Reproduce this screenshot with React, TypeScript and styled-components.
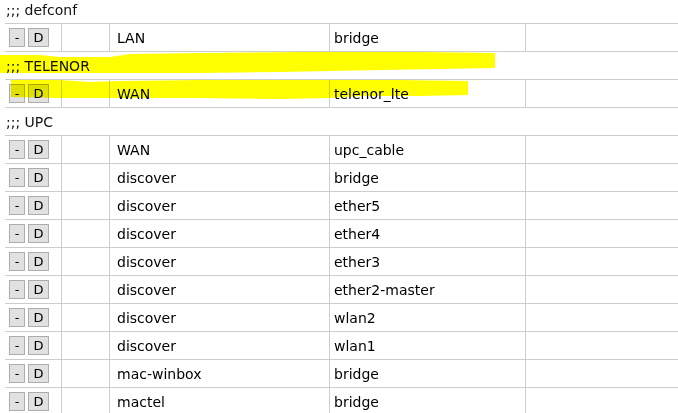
import React from "react";
import styled, { createGlobalStyle } from "styled-components";

const Global = createGlobalStyle`
  html, body { margin: 0; padding: 0; background: #fff; }
  body { overflow: hidden; width: 678px; height: 413px; }
  #root { position: relative; }
`;

const Page = styled.div`
  position: relative;
  width: 678px;
  height: 413px;
  overflow: hidden;
  font-family: "DejaVu Sans", Verdana, sans-serif;
  font-size: 14px;
  color: #000;
`;

const Table = styled.div`
  margin-top: -4px;
  margin-left: 5px;
  width: 720px;
  display: flex;
  flex-direction: column;
`;

const CommentRow = styled.div`
  box-sizing: border-box;
  height: 28px;
  border-bottom: 1px solid #cdcdcd;
  display: flex;
  align-items: center;
  padding-left: 1px;
  color: #111;
`;

const Row = styled.div`
  box-sizing: border-box;
  height: 28px;
  display: grid;
  grid-template-columns: 56px 48px 220px 196px 1fr;
`;

const Cell = styled.div<{ $pad?: number; $first?: boolean }>`
  box-sizing: border-box;
  border-bottom: 1px solid #cdcdcd;
  border-left: ${(p) => (p.$first ? "none" : "1px solid #cdcdcd")};
  padding-left: ${(p) => p.$pad ?? 0}px;
  display: flex;
  align-items: center;
  gap: 3px;
  white-space: nowrap;
`;

const Btn = styled.button<{ $w: number }>`
  box-sizing: border-box;
  width: ${(p) => p.$w}px;
  height: 19px;
  padding: 0;
  margin: 0;
  background: #e1e1e1;
  border: 1px solid #adadad;
  font-family: "DejaVu Sans", Verdana, sans-serif;
  font-size: 13px;
  line-height: 17px;
  color: #000;
  text-align: center;
`;

const Overlay = styled.svg`
  position: absolute;
  left: 0;
  top: 0;
  pointer-events: none;
  mix-blend-mode: multiply;
`;

type Item =
  | { kind: "comment"; text: string }
  | { kind: "row"; a: string; b: string };

const items: Item[] = [
  { kind: "comment", text: ";;; defconf" },
  { kind: "row", a: "LAN", b: "bridge" },
  { kind: "comment", text: ";;; TELENOR" },
  { kind: "row", a: "WAN", b: "telenor_lte" },
  { kind: "comment", text: ";;; UPC" },
  { kind: "row", a: "WAN", b: "upc_cable" },
  { kind: "row", a: "discover", b: "bridge" },
  { kind: "row", a: "discover", b: "ether5" },
  { kind: "row", a: "discover", b: "ether4" },
  { kind: "row", a: "discover", b: "ether3" },
  { kind: "row", a: "discover", b: "ether2-master" },
  { kind: "row", a: "discover", b: "wlan2" },
  { kind: "row", a: "discover", b: "wlan1" },
  { kind: "row", a: "mac-winbox", b: "bridge" },
  { kind: "row", a: "mactel", b: "bridge" },
];

export default function App() {
  return (
    <>
      <Global />
      <Page>
        <Table>
          {items.map((it, i) =>
            it.kind === "comment" ? (
              <CommentRow key={i}>{it.text}</CommentRow>
            ) : (
              <Row key={i}>
                <Cell $first $pad={4}>
                  <Btn $w={16}>-</Btn>
                  <Btn $w={21}>D</Btn>
                </Cell>
                <Cell />
                <Cell $pad={7}>{it.a}</Cell>
                <Cell $pad={4}>{it.b}</Cell>
                <Cell />
              </Row>
            )
          )}
        </Table>
        <Overlay width="678" height="413" viewBox="0 0 678 413">
          <path
            fill="#ffff00"
            d="M0,55 L40,55 L60,57 L110,57 L130,54 L200,53 L300,52 L420,52 L495,53 L495,68 L440,69 L380,70 L330,71 L280,72 L200,73 L120,73 L60,73 L0,73 Z"
          />
          <path
            fill="#ffff00"
            d="M11,80 L60,80 L90,82 L120,81 L200,80 L300,80 L400,80 L468,81 L468,95 L420,96 L360,96 L330,98 L280,99 L200,98 L120,98 L60,98 L11,97 Z"
          />
        </Overlay>
      </Page>
    </>
  );
}
